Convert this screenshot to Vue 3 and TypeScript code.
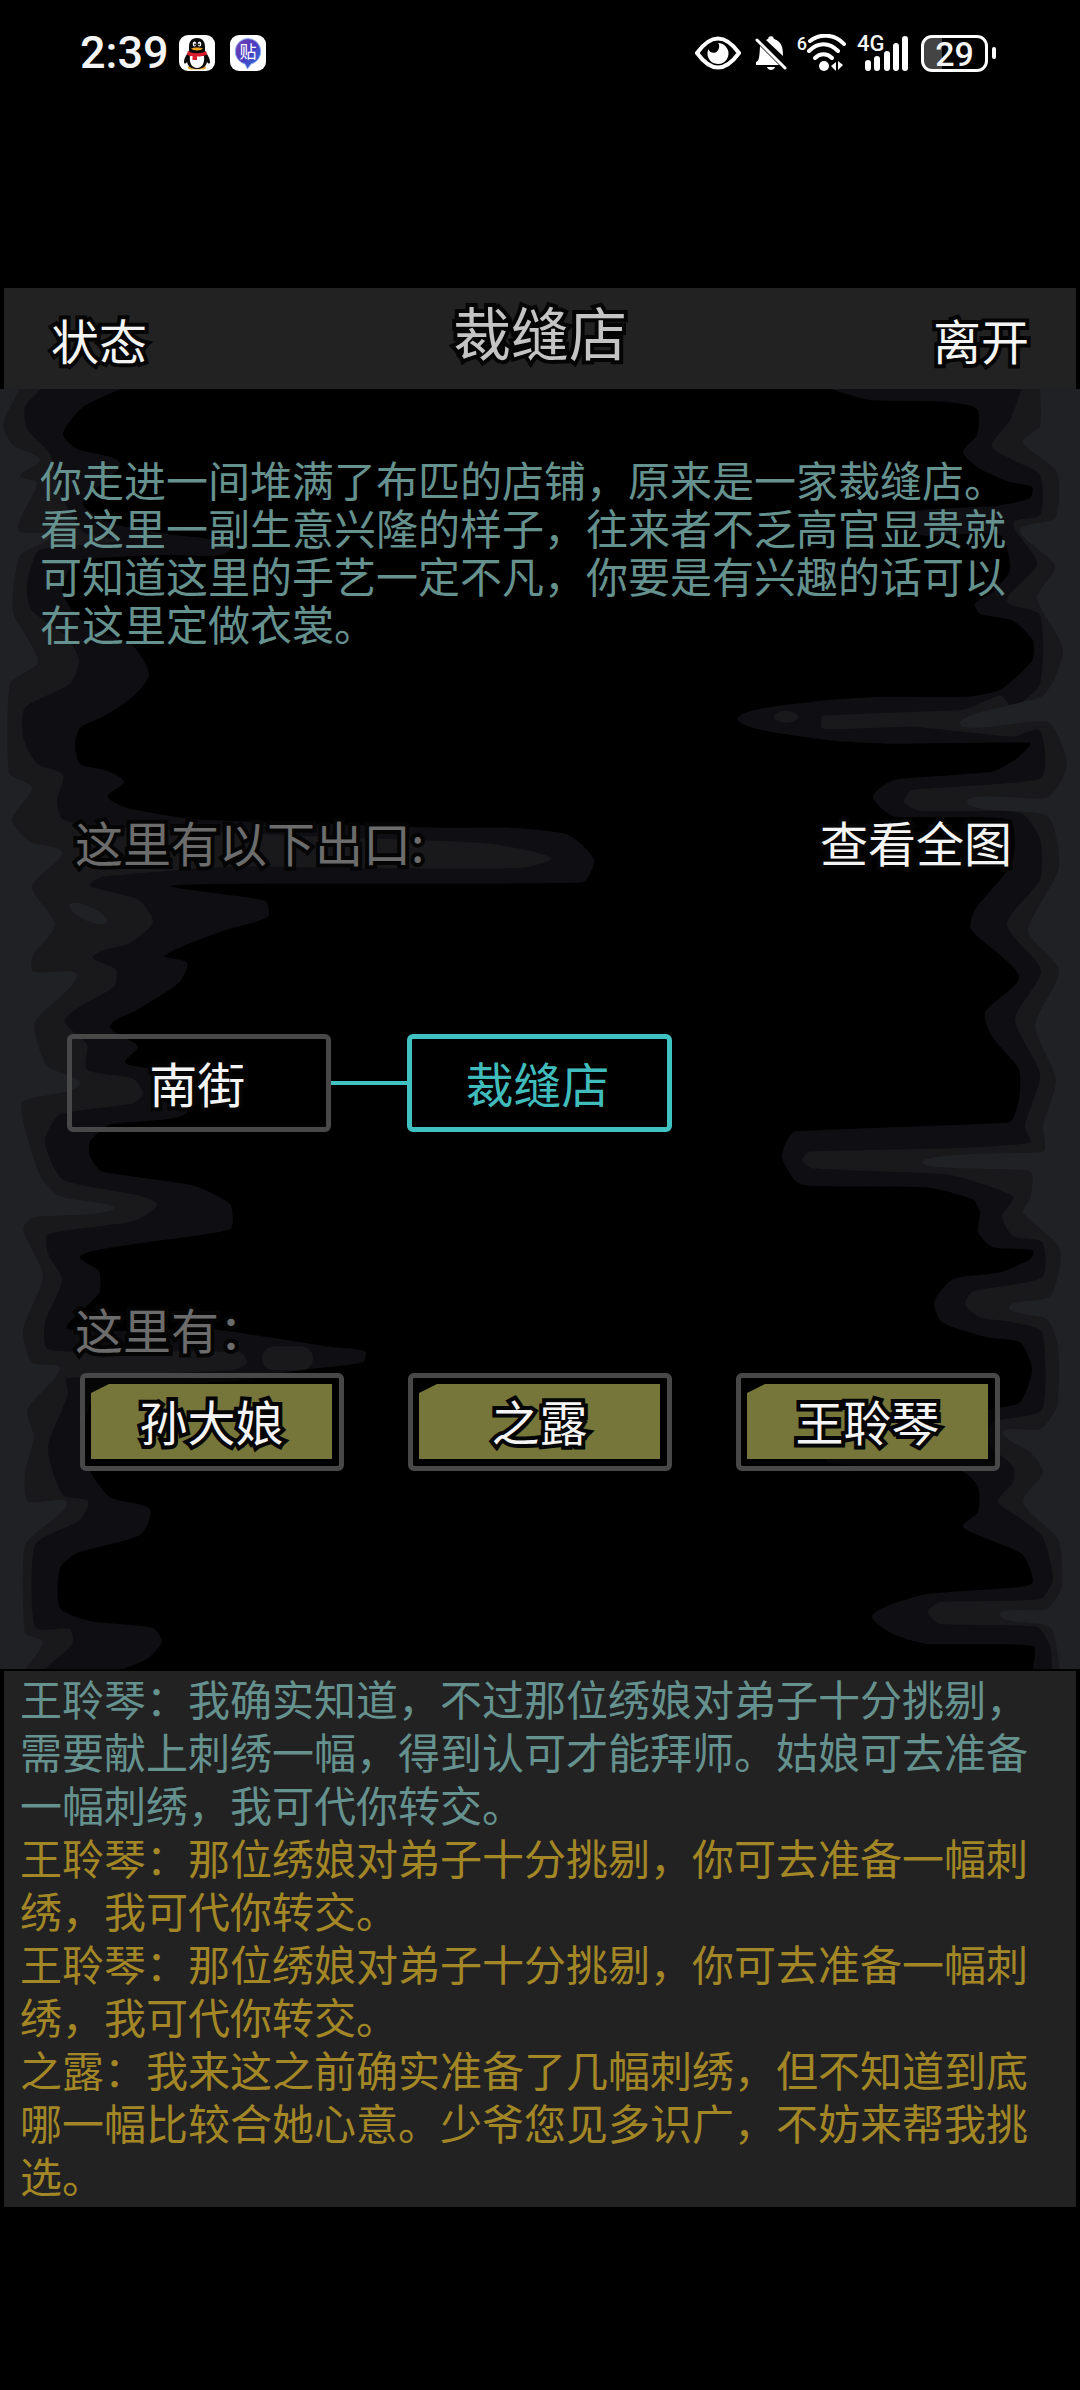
<script setup lang="ts">
interface LogLine {
  tone: 'teal' | 'gold'
  text: string
}

const title = '裁缝店'
const description =
  '你走进一间堆满了布匹的店铺，原来是一家裁缝店。看这里一副生意兴隆的样子，往来者不乏高官显贵就可知道这里的手艺一定不凡，你要是有兴趣的话可以在这里定做衣裳。'
const people: string[] = ['孙大娘', '之露', '王聆琴']
const log: LogLine[] = [
  { tone: 'teal', text: '王聆琴：我确实知道，不过那位绣娘对弟子十分挑剔，需要献上刺绣一幅，得到认可才能拜师。姑娘可去准备一幅刺绣，我可代你转交。' },
  { tone: 'gold', text: '王聆琴：那位绣娘对弟子十分挑剔，你可去准备一幅刺绣，我可代你转交。' },
  { tone: 'gold', text: '王聆琴：那位绣娘对弟子十分挑剔，你可去准备一幅刺绣，我可代你转交。' },
  { tone: 'gold', text: '之露：我来这之前确实准备了几幅刺绣，但不知道到底哪一幅比较合她心意。少爷您见多识广，不妨来帮我挑选。' },
]

// Ink-wash shores on both sides of the scene: x,y pairs running from top to bottom.
interface Shore {
  side: 'left' | 'right'
  fill: string
  points: string
}

const shores: Shore[] = [
  {
    side: 'left',
    fill: '#0f0f13',
    points:
      '123,388 83,407 63,434 77,449 120,463 95,490 83,505 110,523 167,534 230,549 167,555 77,561 62,590 72,610 90,628 133,646 149,675 133,697 103,717 80,728 75,746 80,764 107,771 124,782 108,797 130,809 200,820 440,828 510,828 568,835 594,860 582,883 344,884 172,886 265,901 268,917 227,930 165,956 187,963 179,983 138,1010 110,1027 138,1047 125,1063 150,1070 187,1113 110,1125 90,1142 90,1157 102,1172 193,1186 230,1205 230,1230 133,1245 80,1257 99,1272 99,1294 68,1330 213,1330 333,1348 365,1352 363,1363 300,1371 233,1382 100,1390 85,1424 87,1466 110,1498 150,1510 140,1536 77,1554 60,1569 60,1609 90,1622 153,1629 162,1643 147,1660 120,1671',
  },
  {
    side: 'left',
    fill: '#19191b',
    points:
      '42,388 25,407 27,429 50,454 60,492 83,532 117,541 40,550 27,585 30,608 47,623 67,637 79,661 70,684 25,708 23,737 37,764 63,775 57,800 63,820 120,828 300,836 482,843 551,858 523,868 427,869 227,867 103,877 90,886 138,900 153,922 131,943 93,957 116,970 114,987 65,1020 87,1045 87,1070 133,1079 143,1094 133,1104 60,1115 45,1142 63,1180 133,1195 157,1205 133,1222 48,1235 48,1254 62,1281 45,1323 48,1350 133,1352 240,1353 247,1363 233,1371 67,1379 68,1395 48,1449 63,1496 88,1502 80,1521 35,1546 35,1628 70,1630 73,1643 67,1651 43,1671',
  },
  {
    side: 'left',
    fill: '#202125',
    points:
      '20,388 3,425 13,445 40,460 20,476 37,483 18,530 50,536 20,556 13,612 38,662 10,684 9,773 32,788 12,820 30,842 62,853 32,887 55,925 33,956 33,972 77,976 35,1023 47,1066 80,1085 23,1102 23,1121 40,1176 60,1197 113,1210 33,1218 23,1230 43,1277 23,1331 32,1363 60,1369 27,1411 34,1437 25,1474 28,1502 67,1504 25,1546 25,1634 43,1643 25,1671',
  },
  {
    side: 'right',
    fill: '#0f0f13',
    points:
      '827,388 870,400 947,402 977,409 977,435 963,452 980,469 1010,482 1032,487 1030,498 997,506 913,512 920,535 1000,535 1010,570 993,592 975,604 980,614 1013,621 1033,641 1032,661 1000,690 967,697 880,697 813,702 738,720 826,740 888,744 1030,743 1019,757 992,772 895,780 873,797 895,817 1009,820 1012,863 975,910 971,930 1019,977 985,1013 992,1037 1019,1070 1019,1100 1009,1123 795,1132 782,1157 799,1184 840,1187 927,1188 973,1200 980,1213 978,1233 993,1248 1033,1251 1030,1260 1000,1273 953,1280 934,1303 942,1323 987,1338 1020,1343 1032,1370 1020,1403 987,1410 880,1432 827,1463 960,1471 978,1487 978,1513 963,1528 1022,1555 1033,1583 1020,1588 927,1595 887,1607 872,1618 893,1635 927,1645 1033,1647 1033,1671',
  },
  {
    side: 'right',
    fill: '#19191b',
    points:
      '1022,388 1010,420 992,446 1013,460 1040,475 1040,515 1013,523 1037,564 1007,601 1040,615 1040,684 1013,707 1000,696 963,710 823,716 823,729 913,727 1013,737 1040,731 1040,779 913,790 904,802 920,811 1020,813 1040,839 1040,880 1007,925 1041,971 1015,1020 1040,1075 1025,1126 1030,1143 947,1149 810,1152 802,1161 813,1169 947,1175 1013,1197 1002,1217 1013,1237 1042,1243 1042,1278 973,1292 965,1305 980,1318 1013,1323 1042,1333 1042,1410 993,1423 987,1443 1013,1467 1013,1483 998,1502 1017,1517 1042,1537 1053,1580 1040,1600 940,1603 928,1613 940,1625 1037,1628 1050,1647 1052,1671',
  },
  {
    side: 'right',
    fill: '#202125',
    points:
      '1040,388 1040,426 1023,442 1057,472 1055,518 1020,530 1055,566 1037,598 1063,650 1043,696 960,724 1047,722 1067,765 1047,798 967,802 1047,816 1059,868 1028,931 1059,971 1035,1026 1056,1080 1043,1126 1043,1152 923,1162 1030,1172 1030,1200 1023,1213 1060,1250 1050,1297 1009,1308 1047,1320 1058,1347 1057,1407 1040,1430 1003,1433 1030,1453 1043,1473 1023,1503 1058,1540 1062,1587 1047,1610 1000,1616 1050,1628 1060,1671',
  },
]

function shorePath(shore: Shore): string {
  const pts = shore.points.split(' ').map((pair) => pair.split(',').map(Number))
  const edge = shore.side === 'left' ? -10 : 1090
  let d = `M${edge} 380 L${pts[0][0]} ${pts[0][1]}`
  for (let i = 0; i < pts.length - 1; i++) {
    const before = pts[Math.max(i - 1, 0)]
    const from = pts[i]
    const to = pts[i + 1]
    const after = pts[Math.min(i + 2, pts.length - 1)]
    // The handle length is bound to the segment, so long tongues do not overshoot.
    const length = Math.min(Math.hypot(to[0] - from[0], to[1] - from[1]), 60)
    const handle = (a: number[], b: number[]) => {
      const span = Math.hypot(b[0] - a[0], b[1] - a[1]) || 1
      return [((b[0] - a[0]) / span) * length * 0.2, ((b[1] - a[1]) / span) * length * 0.2]
    }
    const h1 = handle(before, to)
    const h2 = handle(from, after)
    d += ` C${from[0] + h1[0]} ${from[1] + h1[1]} ${to[0] - h2[0]} ${to[1] - h2[1]} ${to[0]} ${to[1]}`
  }
  return `${d} L${edge} 1680 Z`
}

const shorePaths = shores.map((shore) => ({ fill: shore.fill, d: shorePath(shore) }))
</script>

<template>
  <div class="page" lang="zh-CN">
    <div class="status">
      <div class="status-side">
        <span class="clock">2:39</span>
        <svg class="app-icon" viewBox="0 0 36 36" aria-hidden="true">
          <rect width="36" height="36" rx="9" fill="#fff" />
          <path d="M9 33c0-3 4-3 9-3s9 0 9 3c0 2-4 1.500-9 1.500S9 35 9 33z" fill="#e9a93a" />
          <path d="M18 3c-6 0-8 4-8 9v4c-2 3-5 7-5 11 0 2 1.500 2 3 0 1 5 5 7 10 7s9-2 10-7c1.500 2 3 2 3 0 0-4-3-8-5-11v-4c0-5-2-9-8-9z" fill="#0b0b0b" />
          <path d="M11 21c-1 7 2 12 7 12s8-5 7-12z" fill="#fff" />
          <ellipse cx="15.500" cy="9" rx="1.800" ry="2.600" fill="#fff" />
          <ellipse cx="20.500" cy="9" rx="1.800" ry="2.600" fill="#fff" />
          <circle cx="16" cy="9.500" r="0.900" />
          <circle cx="20" cy="9.500" r="0.900" />
          <path d="M12 13.500c3-1.500 9-1.500 12 0-2 2.500-10 2.500-12 0z" fill="#f4a51c" />
          <path d="M9 16c5 3 13 3 18 0l1 3.500c-3 1.500-6 2-10 2v3.500h-4.500V21c-2 0-4-.5-5.500-1.500z" fill="#d81e2c" />
        </svg>
        <svg class="app-icon" viewBox="0 0 36 36" aria-hidden="true">
          <defs>
            <linearGradient id="bubble" x1="0" y1="0" x2="1" y2="1">
              <stop offset="0" stop-color="#7a3fb0" />
              <stop offset="0.500" stop-color="#4a3cc0" />
              <stop offset="1" stop-color="#2b7be0" />
            </linearGradient>
          </defs>
          <rect width="36" height="36" rx="9" fill="#fff" />
          <path d="M18 3.500a13 13 0 0 1 3 25.600L17.500 34 15 29.100A13 13 0 0 1 18 3.500z" fill="url(#bubble)" stroke="#8fb4f0" />
          <text x="18" y="23" text-anchor="middle" font-size="17" fill="#fff" class="cjk">贴</text>
        </svg>
      </div>
      <div class="status-side">
        <svg width="46" height="36" viewBox="0 0 46 36" aria-hidden="true">
          <path d="M2 18Q23-11 44 18Q23 47 2 18z" fill="none" stroke="#fff" stroke-width="4" stroke-linejoin="round" />
          <path d="M23 8a10.500 10.500 0 1 1-9.500 6c1 4 6 5 8.500 2.500S25 10 23 8z" fill="#fff" />
        </svg>
        <svg class="bell" width="32" height="36" viewBox="0 0 32 36" aria-hidden="true">
          <path d="M11 5c1.500-1 2.500-1 2.500-2.500a3 3 0 0 1 5 0c0 1.500 1 1.500 3 2.500 5 3 6.500 7 6.500 16z" fill="#fff" />
          <path d="M5 11 24 30H1v-3c3-1 3.500-5 4-16z" fill="#fff" />
          <path d="M12 32h8c-1 4-7 4-8 0z" fill="#fff" />
          <path d="M2 5 30 33" stroke="#fff" stroke-width="3" stroke-linecap="round" />
        </svg>
        <span class="generation wifi-generation">6</span>
        <svg width="40" height="38" viewBox="10 0 40 38" aria-hidden="true">
          <g fill="none" stroke="#fff" stroke-width="4" stroke-linecap="round">
            <path d="M13 7C23-1 38 0 47 10" />
            <path d="M12 17c9-9 20-9 29 0" />
            <path d="M18 24c5-5 12-5 17 0" />
          </g>
          <circle cx="27" cy="32" r="5" fill="#fff" />
          <path d="M34 32l5-4v9zM41 27l5 4-5 5z" fill="#fff" />
        </svg>
        <span class="signal">
          <span class="generation cell-generation">4G</span>
          <svg width="52" height="38" viewBox="0 0 52 38" aria-hidden="true">
            <path d="M11 29v5M20 25v9M30 20v14M39 12v22M48 5v29" stroke="#fff" stroke-width="6" stroke-linecap="round" />
          </svg>
        </span>
        <span class="battery"><span class="charge">29</span></span>
      </div>
    </div>

    <header class="bar">
      <button type="button" class="outlined">状态</button>
      <h1 class="outlined">{{ title }}</h1>
      <button type="button" class="outlined">离开</button>
    </header>

    <main class="scene">
      <svg class="backdrop" viewBox="0 389 1080 1281" preserveAspectRatio="none" aria-hidden="true">
        <path v-for="(shore, i) in shorePaths" :key="i" :d="shore.d" :fill="shore.fill" />
        <g fill="#19191b">
          <ellipse cx="786" cy="717" rx="12" ry="6" />
          <rect x="262" y="1347" width="51" height="24" rx="12" />
        </g>
        <path d="M69 905c5-7 40 8 38 18-6 6-36-5-38-18z" fill="#202125" />
      </svg>

      <p class="description">{{ description }}</p>

      <div class="row">
        <h2 class="outlined">这里有以下出口:</h2>
        <button type="button" class="outlined">查看全图</button>
      </div>
      <nav class="exits">
        <button type="button" class="place outlined">南街</button>
        <span class="link"></span>
        <button type="button" class="place current" aria-current="location">{{ title }}</button>
      </nav>

      <h2 class="outlined here">这里有：</h2>
      <div class="people">
        <button v-for="name in people" :key="name" type="button" class="person">
          <span class="plate outlined">{{ name }}</span>
        </button>
      </div>
    </main>

    <section class="log">
      <p v-for="(line, i) in log" :key="i" :class="line.tone">{{ line.text }}</p>
    </section>
  </div>
</template>

<style>
body {
  margin: 0;
  background: #000;
}
</style>

<style scoped>
.page {
  min-height: 100vh;
  background: #000;
  color: #f4f4f4;
  font-family: "Noto Sans CJK SC", sans-serif;
  font-size: 48px;
  line-height: 56px;
}

p,
h1,
h2 {
  margin: 0;
  font-weight: 400;
}

button {
  margin: 0;
  padding: 0;
  border: 0;
  background: none;
  color: inherit;
  font: inherit;
}

.outlined {
  -webkit-text-stroke: 8px #050505;
  paint-order: stroke fill;
}

.status {
  display: flex;
  justify-content: space-between;
  align-items: center;
  height: 106px;
  padding: 0 92px 0 80px;
  margin-bottom: 182px;
  font-family: Roboto, sans-serif;
}

.status-side {
  display: flex;
  align-items: center;
}

.clock {
  font-size: 45px;
  font-weight: 500;
}

.app-icon {
  width: 36px;
  height: 36px;
  margin-left: 10px;
}

.app-icon + .app-icon {
  margin-left: 15px;
}

.cjk {
  font-family: "Noto Sans CJK SC", sans-serif;
}

.bell {
  margin-left: 14px;
}

.generation {
  align-self: flex-start;
  font-weight: 500;
  line-height: 20px;
}

.wifi-generation {
  margin-left: 10px;
  font-size: 18px;
}

.signal {
  position: relative;
  display: flex;
  margin-left: 10px;
}

.cell-generation {
  position: absolute;
  top: 0;
  left: 0;
  font-size: 22px;
}

.battery {
  position: relative;
  margin-left: 12px;
}

.battery::after {
  content: "";
  position: absolute;
  top: 12px;
  right: -8px;
  width: 4px;
  height: 12px;
  border-radius: 2px;
  background: #fff;
}

.charge {
  display: block;
  box-sizing: border-box;
  width: 67px;
  height: 37px;
  border: 3px solid #fff;
  border-radius: 11px;
  background: linear-gradient(90deg, #444 30%, #000 30%);
  font-size: 34px;
  font-weight: 500;
  line-height: 32px;
  text-align: center;
}

.bar {
  display: flex;
  justify-content: space-between;
  align-items: center;
  height: 101px;
  margin: 0 4px;
  padding: 0 47px;
  background: #222;
}

h1 {
  margin-bottom: 16px;
  color: #c4c4c4;
  font-size: 58px;
}

.scene {
  position: relative;
  isolation: isolate;
  padding: 66px 80px 198px;
}

.backdrop {
  position: absolute;
  inset: 0;
  z-index: -1;
  width: 100%;
  height: 100%;
}

.description {
  margin: 0 -12px 166px -40px;
  color: #65918e;
  font-size: 42px;
  line-height: 48px;
}

.row {
  display: flex;
  justify-content: space-between;
  margin: 0 -12px 165px -5px;
}

h2 {
  color: #6c6c6c;
  font-size: 48px;
  -webkit-text-stroke-color: #121214;
}

.exits {
  display: grid;
  grid-template-columns: 1fr 76px 1fr 64px 1fr;
  align-items: center;
  margin: 0 0 168px -13px;
}

.place {
  height: 98px;
  padding: 0 4px 2px 0;
  border: 5px solid #484848;
  border-radius: 6px;
}

.current {
  border-color: #40c2c2;
  color: #40bcbc;
}

.link {
  height: 4px;
  background: #40c2c2;
}

.here {
  margin: 0 0 17px -5px;
}

.people {
  display: grid;
  grid-template-columns: repeat(3, 1fr);
  gap: 64px;
}

.person {
  display: flex;
  height: 98px;
  padding: 6px 7px 7px 6px;
  border: 5px solid #484848;
  border-radius: 6px;
  background: rgba(0, 0, 0, 0.6);
}

.plate {
  flex: 1;
  align-self: stretch;
  background: #76763a;
  line-height: 73px;
  clip-path: polygon(18px 0, 100% 0, 100% 100%, 0 100%, 0 9px);
}

.log {
  margin: 2px 4px 0;
  padding: 0 16px 6px;
  background: #222;
  font-size: 42px;
  line-height: 53px;
}

.teal {
  color: #65918e;
}

.gold {
  color: #a38726;
}
</style>
